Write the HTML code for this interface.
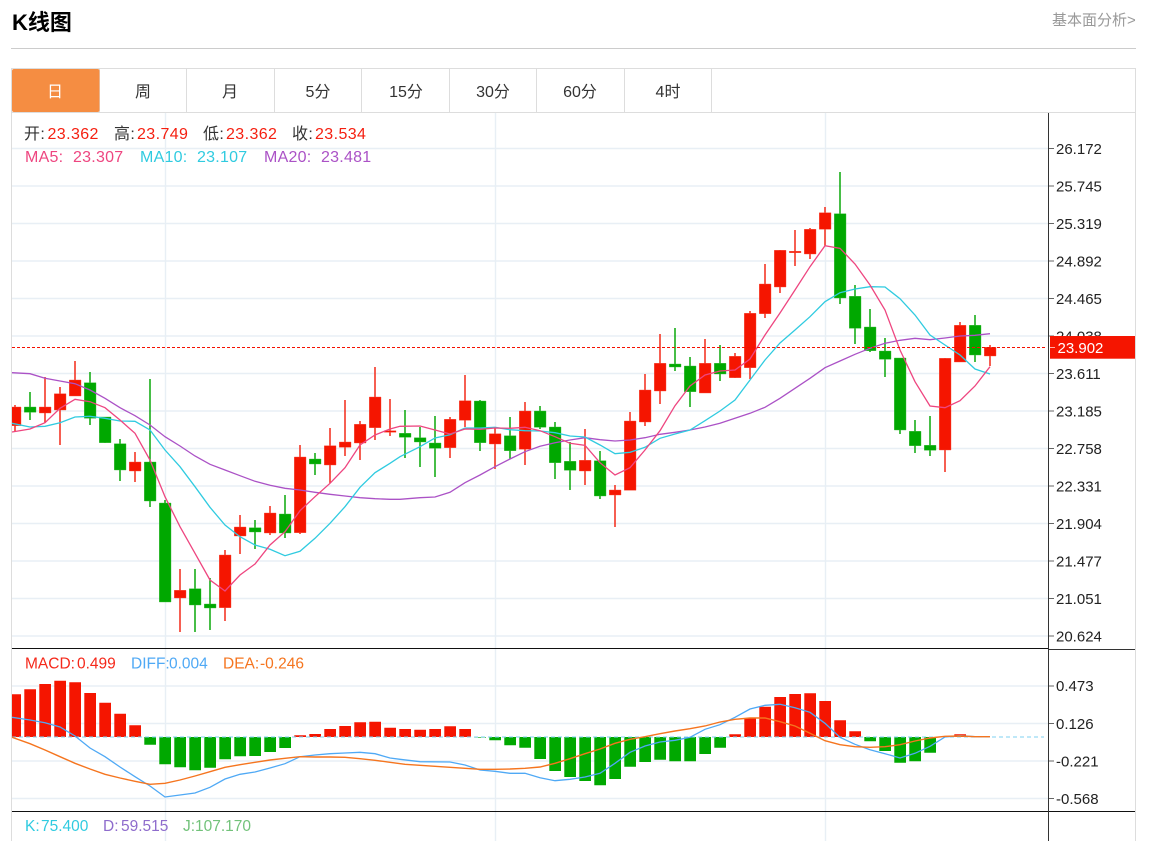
<!DOCTYPE html>
<html lang="zh"><head><meta charset="utf-8"><title>K线图</title>
<style>
html,body{margin:0;padding:0;background:#fff;width:1152px;height:841px;overflow:hidden}
svg{display:block;font-family:"Liberation Sans","Noto Sans CJK SC",sans-serif}
.ax{font-size:15px;fill:#222}
.tb{font-size:16px;fill:#333;text-anchor:middle}
.lg{font-size:16px;letter-spacing:.4px}
.lg2{font-size:16px;letter-spacing:.25px}
.lg3{font-size:15.5px}
</style></head><body>
<svg width="1152" height="841" viewBox="0 0 1152 841" xmlns="http://www.w3.org/2000/svg">
<defs><clipPath id="c"><rect x="12" y="113" width="1036" height="728"/></clipPath></defs>

<text x="12" y="30" font-size="22" font-weight="bold" fill="#000">K线图</text>
<text x="1052" y="25" font-size="15" fill="#999">基本面分析&gt;</text>
<rect x="11" y="48" width="1125" height="1" fill="#ccc"/>

<!-- tabs -->
<path d="M11.5 841V68.5H1135.5V841M12 112.5H1135.5M99.5 69V112M186.5 69V112M274.5 69V112M361.5 69V112M449.5 69V112M536.5 69V112M624.5 69V112M711.5 69V112" fill="none" stroke="#ddd"/>
<rect x="12" y="69" width="87.5" height="43" rx="2" fill="#f58d42"/>
<text class="tb" x="55" y="97" style="fill:#fff">日</text>
<text class="tb" x="143" y="97">周</text>
<text class="tb" x="230" y="97">月</text>
<text class="tb" x="318" y="97">5分</text>
<text class="tb" x="406" y="97">15分</text>
<text class="tb" x="493" y="97">30分</text>
<text class="tb" x="580" y="97">60分</text>
<text class="tb" x="668" y="97">4时</text>

<!-- grid -->
<path d="M12 148.5H1048M12 186H1048M12 223.5H1048M12 261H1048M12 298.5H1048M12 336H1048M12 373.5H1048M12 411H1048M12 448.5H1048M12 486H1048M12 523.5H1048M12 561H1048M12 598.5H1048M12 636H1048M12 686H1048M12 723.5H1048M12 761H1048M12 798.5H1048" stroke="#e8eff5" stroke-width="1.4" fill="none"/>
<path d="M165.5 113V841M495.5 113V841M825.5 113V841" stroke="#e8eff5" stroke-width="1.4" fill="none"/>

<g clip-path="url(#c)">
<!-- red wicks -->
<path d="M15 405V432M45 377V423M60 387V445M75 361V396M135 452V482M180 569V632M225 550V621M240 515V554M270 506V535M300 445V534M330 428V483M345 400V456M360 421V460M375 367V440M390 399V436M450 417V458M465 375V427M495 428V469M525 402V465M585 429V485M615 485V527M630 412V490M645 374V426M660 334V404M705 339V393M735 353V378M750 311V379M765 264V318M780 250V293M795 230V266M810 228V259M825 207V246M945 358V472M960 322V362M990 345V366" stroke="#f42a18" stroke-width="1.5" fill="none"/>
<!-- green wicks -->
<path d="M30 392V420M90 372V425M105 417V443M120 439V481M150 379V507M165 500V602M195 569V632M210 578V630M255 520V549M285 495V538M315 453V475M405 410V458M420 427V467M435 416V477M480 400V451M510 417V459M540 406V429M555 422V479M570 442V490M600 451V499M675 328V371M690 357V407M720 345V381M840 172V304M855 285V344M870 309V352M885 338V377M900 358V434M915 420V453M930 416V456M975 315V362" stroke="#0aa80a" stroke-width="1.5" fill="none"/>
<!-- red bodies -->
<path fill="#f51500" stroke="#f7503f" stroke-width=".4" d="M9.3 407h11.7V425.7h-11.7zM39.3 407h11.7V413h-11.7zM54.3 393.7h11.7V410h-11.7zM69.3 380h11.7V396h-11.7zM129.3 462h11.7V471h-11.7zM174.3 590.3h11.7V598h-11.7zM219.3 555h11.7V607.7h-11.7zM234.3 527h11.7V536h-11.7zM264.3 513h11.7V533h-11.7zM294.3 457h11.7V532.7h-11.7zM324.3 445.7h11.7V465h-11.7zM339.3 442h11.7V447.3h-11.7zM354.3 424.3h11.7V443h-11.7zM369.3 397h11.7V427.7h-11.7zM384.3 430.7h11.7V432.3h-11.7zM444.3 419.3h11.7V447.7h-11.7zM459.3 400.7h11.7V420.3h-11.7zM489.3 433.7h11.7V444h-11.7zM519.3 411h11.7V449.3h-11.7zM579.3 460.3h11.7V471h-11.7zM609.3 490h11.7V495h-11.7zM624.3 421h11.7V490.3h-11.7zM639.3 390h11.7V422h-11.7zM654.3 363.3h11.7V391h-11.7zM699.3 363.3h11.7V393h-11.7zM729.3 356.3h11.7V377.7h-11.7zM744.3 313.3h11.7V367.7h-11.7zM759.3 284h11.7V313.7h-11.7zM774.3 250.3h11.7V287h-11.7zM789.3 251.3h11.7V252.7h-11.7zM804.3 229.3h11.7V254h-11.7zM819.3 212.7h11.7V229.3h-11.7zM939.3 358.3h11.7V450h-11.7zM954.3 325.3h11.7V362h-11.7zM984.3 347.3h11.7V356h-11.7z"/>
<!-- green bodies -->
<path fill="#00a800" stroke="#3fbd3f" stroke-width=".4" d="M24.3 407h11.7V412.3h-11.7zM84.3 382.7h11.7V418.3h-11.7zM99.3 417h11.7V442.7h-11.7zM114.3 443.7h11.7V470h-11.7zM144.3 462h11.7V501h-11.7zM159.3 503h11.7V602h-11.7zM189.3 588.7h11.7V605h-11.7zM204.3 604h11.7V608h-11.7zM249.3 527.7h11.7V532h-11.7zM279.3 514h11.7V533h-11.7zM309.3 459h11.7V464h-11.7zM399.3 433.3h11.7V437.3h-11.7zM414.3 437.7h11.7V442h-11.7zM429.3 443h11.7V448.3h-11.7zM474.3 401h11.7V442.7h-11.7zM504.3 435.7h11.7V450.7h-11.7zM534.3 411h11.7V427.3h-11.7zM549.3 427h11.7V462.7h-11.7zM564.3 461.3h11.7V470.3h-11.7zM594.3 460.7h11.7V496h-11.7zM669.3 364h11.7V367h-11.7zM684.3 366h11.7V391.7h-11.7zM714.3 363.3h11.7V374h-11.7zM834.3 213.7h11.7V298h-11.7zM849.3 296.3h11.7V328.3h-11.7zM864.3 327h11.7V350.7h-11.7zM879.3 351h11.7V359.3h-11.7zM894.3 358h11.7V430h-11.7zM909.3 431.3h11.7V445.7h-11.7zM924.3 445.3h11.7V450.3h-11.7zM969.3 325.3h11.7V355h-11.7z"/>

<!-- MA20 -->
<polyline fill="none" stroke="#ab52c6" stroke-width="1.3" points="12,372.7 30,373.7 45,378.3 60,381 75,383.7 90,390 105,398.3 120,407.7 135,415.7 150,425 165,436.7 180,446 195,456 210,464.3 225,470 240,475.7 255,481.3 270,485.3 285,488.3 300,490 315,492.3 330,494.3 345,496 360,497.7 375,498.7 390,499.3 400,499.3 420,497.7 435,497 450,492.3 465,482.7 480,475 495,466.7 510,459 525,451.7 540,446.3 555,442.7 570,440 585,437.7 600,439.7 615,441 630,440 645,437.7 660,434.3 675,432.3 690,430 705,427 720,423.3 735,418.3 750,413.3 765,407.3 780,398.3 795,388.3 810,378.3 825,367.7 840,361 855,354.3 870,348.3 885,343.3 900,340.3 915,338.3 930,339.7 945,338 960,336 975,335.3 990,333.7"/>
<!-- MA10 -->
<polyline fill="none" stroke="#30cbe0" stroke-width="1.3" points="12,423.3 30,427 45,426.3 60,422.7 75,417 90,416.3 105,418.3 120,421 135,421.3 150,430 165,450 180,466.7 195,486.7 210,507.3 225,525 240,536.7 255,545 270,549.3 285,555.7 300,551.3 315,538.3 330,523.3 345,506.7 360,487.3 375,472.7 390,463.3 400,456.7 420,446.7 435,438 450,434.7 465,428 480,428 495,427.3 510,429.7 525,430.7 540,431 555,432.7 570,436 585,437 600,445 615,453.7 630,452.3 645,447.3 660,438.3 675,434 690,430 705,420.7 720,411 735,400 750,380 765,360 780,343 795,330 810,316.7 825,301.7 840,292.7 855,289 870,286.7 885,287 900,298.7 915,315 930,335 945,345 960,355 975,369 990,374"/>
<!-- MA5 -->
<polyline fill="none" stroke="#ee4680" stroke-width="1.3" points="12,432 30,429 45,422.7 60,408.3 75,399.3 90,401.7 105,407.7 120,420 135,433.3 150,460 165,496.7 180,526.7 195,553.3 210,580 225,591 240,575 255,564 270,545 285,531.7 300,510.7 315,496.7 330,483.3 345,467.7 360,445 375,435 390,429 400,426.3 420,426 435,430 450,434 465,429 480,429.3 495,428 510,428.3 525,427.3 540,430.7 555,436.7 570,443.3 585,445.3 600,462.7 615,475 630,467.7 645,450 660,430.7 675,405.7 690,386 705,375 720,371 735,370 750,359 765,335 780,313 795,290 810,266.7 825,245.7 840,248.3 855,264 870,285 885,310 900,350 915,381.7 930,406 945,407.7 960,400.7 975,386 990,366.7"/>

<!-- MACD red bars -->
<path fill="#f51500" d="M9.3 694.3h11.7V737h-11.7zM24.3 689.3h11.7V737h-11.7zM39.3 684h11.7V737h-11.7zM54.3 680.7h11.7V737h-11.7zM69.3 682.3h11.7V737h-11.7zM84.3 693h11.7V737h-11.7zM99.3 702.7h11.7V737h-11.7zM114.3 713.7h11.7V737h-11.7zM129.3 725.3h11.7V737h-11.7zM294.3 735.3h11.7V737h-11.7zM309.3 734h11.7V737h-11.7zM324.3 729h11.7V737h-11.7zM339.3 726h11.7V737h-11.7zM354.3 722.3h11.7V737h-11.7zM369.3 721.7h11.7V737h-11.7zM384.3 727.7h11.7V737h-11.7zM399.3 729h11.7V737h-11.7zM414.3 729.7h11.7V737h-11.7zM429.3 729h11.7V737h-11.7zM444.3 726.3h11.7V737h-11.7zM459.3 729h11.7V737h-11.7zM729.3 734.3h11.7V737h-11.7zM744.3 718.3h11.7V737h-11.7zM759.3 706.7h11.7V737h-11.7zM774.3 697h11.7V737h-11.7zM789.3 694h11.7V737h-11.7zM804.3 693.3h11.7V737h-11.7zM819.3 701h11.7V737h-11.7zM834.3 720.3h11.7V737h-11.7zM849.3 731.3h11.7V737h-11.7zM954.3 734.3h11.7V737h-11.7z"/>
<!-- MACD green bars -->
<path fill="#00a800" d="M144.3 737h11.7V744.7h-11.7zM159.3 737h11.7V764.3h-11.7zM174.3 737h11.7V767.3h-11.7zM189.3 737h11.7V770.3h-11.7zM204.3 737h11.7V767.7h-11.7zM219.3 737h11.7V759.3h-11.7zM234.3 737h11.7V756.3h-11.7zM249.3 737h11.7V756h-11.7zM264.3 737h11.7V752h-11.7zM279.3 737h11.7V748h-11.7zM474.3 737h11.7V737.6h-11.7zM489.3 737h11.7V740.3h-11.7zM504.3 737h11.7V745.3h-11.7zM519.3 737h11.7V747.7h-11.7zM534.3 737h11.7V759h-11.7zM549.3 737h11.7V771h-11.7zM564.3 737h11.7V777h-11.7zM579.3 737h11.7V781h-11.7zM594.3 737h11.7V785.3h-11.7zM609.3 737h11.7V779h-11.7zM624.3 737h11.7V766.7h-11.7zM639.3 737h11.7V762h-11.7zM654.3 737h11.7V759.7h-11.7zM669.3 737h11.7V761.3h-11.7zM684.3 737h11.7V761.3h-11.7zM699.3 737h11.7V754h-11.7zM714.3 737h11.7V747.7h-11.7zM864.3 737h11.7V741.3h-11.7zM879.3 737h11.7V751h-11.7zM894.3 737h11.7V762.7h-11.7zM909.3 737h11.7V761.3h-11.7zM924.3 737h11.7V752.7h-11.7z"/>
<line x1="12" y1="737" x2="1044" y2="737" stroke="#7fd2f0" stroke-width="1" stroke-dasharray="4 3"/>
<!-- DIFF -->
<polyline fill="none" stroke="#4fa9f5" stroke-width="1.3" points="12,717.3 30,720 45,722.7 60,727 75,736 90,748 105,756.7 120,767 135,776.7 150,786 165,797 180,795 195,793 210,787.3 225,779 240,774.3 255,772 270,768 285,763.7 300,756.7 315,755 330,753.7 345,753 360,752.3 375,753.7 390,758 400,759.3 420,761.7 450,762 465,765 480,770 495,771.3 510,773.3 525,773.3 540,777.7 555,780.7 570,779.3 585,777 600,773.3 615,763.3 630,752.3 645,746 660,742 675,740.3 690,737.3 705,729.3 720,724.7 735,717.3 750,709 765,705.3 780,704.3 795,707.7 810,712.3 825,723.3 840,737.3 855,744.3 870,749.7 885,753.7 900,758 915,753.3 930,746.3 945,737 960,735.7 975,736.7 990,736.7"/>
<!-- DEA -->
<polyline fill="none" stroke="#f5751f" stroke-width="1.4" points="12,737.3 30,743.7 45,750 60,756.7 75,763.3 90,769 105,774.3 120,778 135,781.3 150,784.3 165,783.3 180,780 195,776 210,771.7 225,767.3 240,764.7 255,762.3 270,760 285,758.3 300,756.7 315,757 330,757 345,757.3 360,758.7 375,760.3 390,762.3 405,764.3 420,765.3 450,767.3 465,768.3 480,769.3 495,769.3 510,769 525,768.3 540,767 555,763.3 570,758.7 585,753.7 600,749 615,743.3 630,739.3 645,736.7 660,733.7 675,731 690,728.7 705,726 720,722 735,719.3 750,718 765,718 780,721.7 795,726 810,733.3 825,740.7 840,744.7 855,746.7 870,747.3 885,746.7 900,744.7 915,741 930,738 945,736.3 960,736 975,736.7 990,736.7"/>
</g>

<!-- dashed price line -->
<line x1="12" y1="347.5" x2="1046" y2="347.5" stroke="#f51000" stroke-width="1" stroke-dasharray="3 2"/>

<!-- panel separators -->
<path d="M12 648.5H1048M12 811.5H1135" stroke="#111" stroke-width="1" fill="none"/>
<path d="M1048 649.5H1135" stroke="#333" stroke-width="1" fill="none"/>
<path d="M1048.5 113V841" stroke="#333" stroke-width="1" fill="none"/>

<!-- axis ticks -->
<path d="M1049 148.5h5M1049 186h5M1049 223.5h5M1049 261h5M1049 298.5h5M1049 336h5M1049 373.5h5M1049 411h5M1049 448.5h5M1049 486h5M1049 523.5h5M1049 561h5M1049 598.5h5M1049 636h5M1049 686h5M1049 723.5h5M1049 761h5M1049 798.5h5" stroke="#666" stroke-width="1" fill="none"/>

<!-- axis labels -->
<g class="ax">
<text x="1056" y="154">26.172</text>
<text x="1056" y="191.5">25.745</text>
<text x="1056" y="229">25.319</text>
<text x="1056" y="266.5">24.892</text>
<text x="1056" y="304">24.465</text>
<text x="1056" y="341.5">24.038</text>
<text x="1056" y="379">23.611</text>
<text x="1056" y="416.5">23.185</text>
<text x="1056" y="454">22.758</text>
<text x="1056" y="491.5">22.331</text>
<text x="1056" y="529">21.904</text>
<text x="1056" y="566.5">21.477</text>
<text x="1056" y="604">21.051</text>
<text x="1056" y="641.5">20.624</text>
<text x="1056" y="691">0.473</text>
<text x="1056" y="729">0.126</text>
<text x="1056" y="766.5">-0.221</text>
<text x="1056" y="804">-0.568</text>
</g>

<!-- price tag -->
<rect x="1050" y="336" width="85" height="22.7" fill="#f51500"/>
<path d="M1050 347.5h5" stroke="#ffb0a8" stroke-width="1"/>
<text x="1057.5" y="353" font-size="15" fill="#fff">23.902</text>

<!-- legends -->
<g class="lg">
<text x="24" y="139" fill="#333">开:</text><text x="47.5" y="139" fill="#f51f10">23.362</text>
<text x="114" y="139" fill="#333">高:</text><text x="137" y="139" fill="#f51f10">23.749</text>
<text x="203" y="139" fill="#333">低:</text><text x="226" y="139" fill="#f51f10">23.362</text>
<text x="292" y="139" fill="#333">收:</text><text x="315" y="139" fill="#f51f10">23.534</text>
</g>
<g class="lg2">
<text x="25" y="162" fill="#ee4680">MA5:</text><text x="73" y="162" fill="#ee4680">23.307</text>
<text x="140" y="162" fill="#30cbe0">MA10:</text><text x="197" y="162" fill="#30cbe0">23.107</text>
<text x="264" y="162" fill="#ab52c6">MA20:</text><text x="321" y="162" fill="#ab52c6">23.481</text>
</g>
<g class="lg3">
<text x="25" y="668.5" fill="#f5281a">MACD:</text><text x="77" y="668.5" fill="#f5281a">0.499</text>
<text x="131" y="668.5" fill="#4fa9f5">DIFF:</text><text x="169" y="668.5" fill="#4fa9f5">0.004</text>
<text x="223" y="668.5" fill="#f5751f">DEA:</text><text x="260" y="668.5" fill="#f5751f">-0.246</text>
<text x="25" y="831" fill="#30cbe0">K:</text><text x="41" y="831" fill="#30cbe0">75.400</text>
<text x="103" y="831" fill="#8e6ccc">D:</text><text x="121" y="831" fill="#8e6ccc">59.515</text>
<text x="183" y="831" fill="#72c27a">J:</text><text x="195" y="831" fill="#72c27a">107.170</text>
</g>
</svg>
</body></html>
